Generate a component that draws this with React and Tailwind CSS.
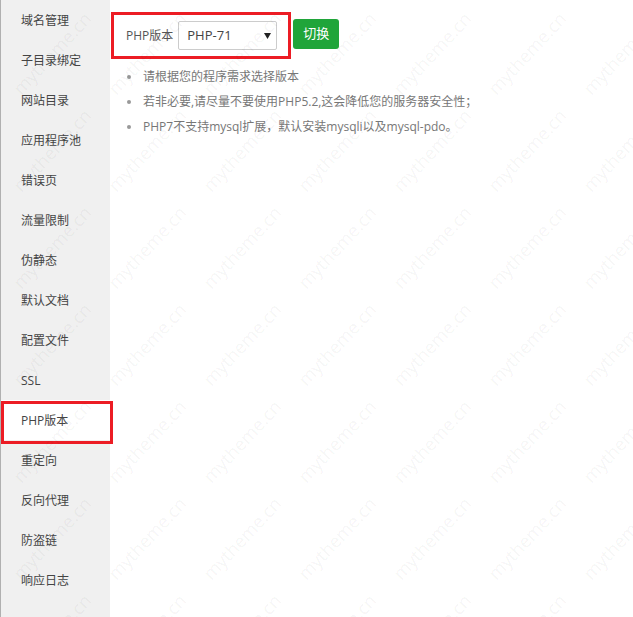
import React from 'react';

const menu = [
  '域名管理', '子目录绑定', '网站目录', '应用程序池', '错误页', '流量限制', '伪静态',
  '默认文档', '配置文件', 'SSL', 'PHP版本', '重定向', '反向代理', '防盗链', '响应日志',
];

const tips = [
  '请根据您的程序需求选择版本',
  '若非必要,请尽量不要使用PHP5.2,这会降低您的服务器安全性；',
  'PHP7不支持mysql扩展，默认安装mysqli以及mysql-pdo。',
];

// faint diagonal watermark laid over the whole page
const Watermark = () => (
  <div aria-hidden="true" className="pointer-events-none absolute left-[5px] top-[5px] grid grid-cols-[repeat(7,95px)] auto-rows-[97px]">
    {Array.from({ length: 49 }).map((_, i) => (
      <div key={i} className="flex items-center justify-center">
        <span className="-rotate-[47deg] whitespace-nowrap text-[18px] text-black/[0.05]">mytheme.cn</span>
      </div>
    ))}
  </div>
);

const App = () => {
  const active = 'PHP版本';

  return (
    <div
      className="relative flex h-[617px] w-full overflow-hidden bg-white"
      style={{ fontFamily: '"Open Sans", "Noto Sans CJK SC", sans-serif' }}
    >
      {/* Sidebar */}
      <div className="w-[110px] shrink-0 border-l border-[#b0b0b0] bg-[#f0f0f0]">
        {menu.map((item) => (
          <div
            key={item}
            className={`relative flex h-[40px] items-center pl-[20px] pt-[2px] text-[12px] text-[#444] ${
              item === active ? 'bg-white' : ''
            }`}
          >
            {item}
            {item === active && (
              <div className="absolute left-0 top-[1px] h-[43px] w-[112px] border-[3px] border-[#ec1c24]"></div>
            )}
          </div>
        ))}
      </div>

      {/* Content */}
      <div className="flex-1 pl-[1px] pt-[12px]">
        <div className="flex items-start">
          <div className="flex h-[47px] items-center border-[3px] border-[#ec1c24] pl-[12px] pr-[11px]">
            <span className="text-[12px] text-[#555]">PHP版本</span>
            <div className="ml-[5px] flex h-[29px] w-[99px] items-center justify-between rounded-[2px] border border-[#ccc] bg-white pl-[8px] pr-[5px]">
              <span className="text-[13px] text-[#444]">PHP-71</span>
              <svg width="7" height="6" viewBox="0 0 7 6">
                <path d="M0 0 L7 0 L3.5 6 Z" fill="#222" />
              </svg>
            </div>
          </div>
          <button className="ml-[2px] mt-[7px] h-[30px] w-[46px] rounded-[3px] bg-[#20a53a] text-[13px] text-white">
            切换
          </button>
        </div>

        <ul className="mt-[5px]">
          {tips.map((tip) => (
            <li key={tip} className="flex items-center text-[12px] leading-[25px] text-[#777]">
              <span className="ml-[16px] mr-[12px] h-[4px] w-[4px] rounded-full bg-[#999]"></span>
              {tip}
            </li>
          ))}
        </ul>
      </div>

      <Watermark />
    </div>
  );
};

export default App;
